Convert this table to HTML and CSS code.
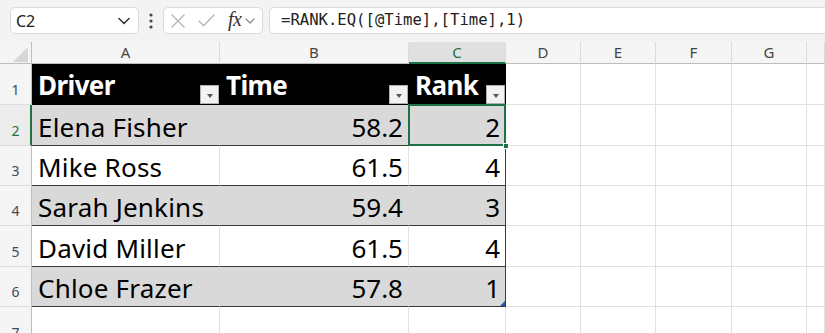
FILE: index.html
```html
<!DOCTYPE html>
<html>
<head>
<meta charset="utf-8">
<link rel="stylesheet" href="styles.css">
</head>
<body>
<div class="app">
  <div class="toolbar">
    <div class="namebox">
      <span class="name">C2</span>
      <svg class="chev" width="12" height="8" viewBox="0 0 12 8"><path d="M1 1.5 L6 6.5 L11 1.5" fill="none" stroke="#333" stroke-width="1.5" stroke-linecap="round" stroke-linejoin="round"/></svg>
    </div>
    <div class="dots">
      <svg width="6" height="16" viewBox="0 0 6 16"><circle cx="3" cy="2" r="1.6" fill="#444"/><circle cx="3" cy="8" r="1.6" fill="#444"/><circle cx="3" cy="14" r="1.6" fill="#444"/></svg>
    </div>
    <div class="fxbox">
      <svg class="ic-x" width="16" height="14" viewBox="0 0 16 14"><path d="M1.5 0.5 L14.5 13.5 M14.5 0.5 L1.5 13.5" stroke="#b3b3b3" stroke-width="1.3" fill="none"/></svg>
      <svg class="ic-ok" width="17" height="13" viewBox="0 0 17 13"><path d="M0.8 6.8 L5.6 11.8 L16.2 0.8" stroke="#b3b3b3" stroke-width="1.3" fill="none"/></svg>
      <span class="fx">fx</span>
      <svg class="chev2" width="10" height="6" viewBox="0 0 10 6"><path d="M1 1 L5 5 L9 1" fill="none" stroke="#8a8a8a" stroke-width="1.2" stroke-linecap="round" stroke-linejoin="round"/></svg>
    </div>
    <div class="formula">=RANK.EQ([@Time],[Time],1)</div>
  </div>

  <div class="grid">
    <!-- column headers -->
    <div class="corner"><svg width="32" height="22" viewBox="0 0 32 22"><polygon points="28,5 28,20 13,20" fill="#d6d6d6"/></svg></div>
    <div class="hdr">A</div>
    <div class="hdr">B</div>
    <div class="hdr sel">C</div>
    <div class="hdr">D</div>
    <div class="hdr">E</div>
    <div class="hdr">F</div>
    <div class="hdr">G</div>
    <div class="hdr"></div>

    <!-- row 1 -->
    <div class="rn">1</div>
    <div class="c th">Driver<span class="flt"><span class="tri"></span></span></div>
    <div class="c th">Time<span class="flt"><span class="tri"></span></span></div>
    <div class="c th last">Rank<span class="flt"><span class="tri"></span></span></div>
    <div class="c"></div><div class="c"></div><div class="c"></div><div class="c"></div><div class="c"></div>

    <!-- row 2 -->
    <div class="rn sel">2</div>
    <div class="c td band">Elena Fisher</div>
    <div class="c td band num">58.2</div>
    <div class="c td band num last active">2<span class="selbox"></span><span class="handle"></span></div>
    <div class="c"></div><div class="c"></div><div class="c"></div><div class="c"></div><div class="c"></div>

    <!-- row 3 -->
    <div class="rn">3</div>
    <div class="c td">Mike Ross</div>
    <div class="c td num">61.5</div>
    <div class="c td num last">4</div>
    <div class="c"></div><div class="c"></div><div class="c"></div><div class="c"></div><div class="c"></div>

    <!-- row 4 -->
    <div class="rn">4</div>
    <div class="c td band">Sarah Jenkins</div>
    <div class="c td band num">59.4</div>
    <div class="c td band num last">3</div>
    <div class="c"></div><div class="c"></div><div class="c"></div><div class="c"></div><div class="c"></div>

    <!-- row 5 -->
    <div class="rn">5</div>
    <div class="c td">David Miller</div>
    <div class="c td num">61.5</div>
    <div class="c td num last">4</div>
    <div class="c"></div><div class="c"></div><div class="c"></div><div class="c"></div><div class="c"></div>

    <!-- row 6 -->
    <div class="rn">6</div>
    <div class="c td band">Chloe Frazer</div>
    <div class="c td band num">57.8</div>
    <div class="c td band num last">1<span class="resize"></span></div>
    <div class="c"></div><div class="c"></div><div class="c"></div><div class="c"></div><div class="c"></div>

    <!-- row 7 -->
    <div class="rn">7</div>
    <div class="c"></div><div class="c"></div><div class="c"></div><div class="c"></div>
    <div class="c"></div><div class="c"></div><div class="c"></div><div class="c"></div>
  </div>
</div>
</body>
</html>
```

FILE: styles.css
```css
* { box-sizing: border-box; }
html, body { margin: 0; padding: 0; }
body {
  width: 825px;
  height: 333px;
  overflow: hidden;
  background: #ffffff;
  font-family: "Noto Sans", "Liberation Sans", sans-serif;
}
.app {
  display: flex;
  flex-direction: column;
  height: 333px;
}

/* ---------- toolbar ---------- */
.toolbar {
  height: 42px;
  flex: none;
  background: #f3f3f3;
  display: flex;
  align-items: flex-start;
  padding: 7px 0 0 10px;
}
.namebox {
  width: 129px;
  height: 27px;
  background: #fff;
  border: 1px solid #dadada;
  border-radius: 5px;
  display: flex;
  align-items: center;
  justify-content: space-between;
  padding: 0 8px 0 5px;
}
.name {
  font-size: 16px;
  color: #222;
  font-family: "Noto Sans", "Liberation Sans", sans-serif;
}
.chev { display: block; }
.dots {
  width: 24px;
  height: 27px;
  display: flex;
  align-items: center;
  justify-content: center;
}
.dots svg { display: block; }
.fxbox {
  width: 100px;
  height: 27px;
  background: #fff;
  border: 1px solid #dadada;
  border-radius: 5px;
  display: flex;
  align-items: center;
  padding-left: 6px;
}
.ic-x { display: block; margin-right: 12px; }
.ic-ok { display: block; margin-right: 13px; }
.fx {
  font-family: "Liberation Serif", "DejaVu Serif", serif;
  font-style: italic;
  font-size: 20px;
  color: #333;
  line-height: 1;
  margin-top: -3px;
  margin-right: 4px;
  letter-spacing: -0.5px;
}
.chev2 { display: block; margin-top: 1px; }
.formula {
  flex: 1;
  height: 27px;
  margin-left: 6px;
  margin-right: -12px;
  background: #fff;
  border: 1px solid #dadada;
  border-radius: 5px;
  font-family: "DejaVu Sans Mono", "Liberation Mono", monospace;
  font-size: 15.6px;
  color: #222;
  line-height: 25px;
  padding-left: 11px;
  white-space: nowrap;
}

/* ---------- grid ---------- */
.grid {
  flex: 1;
  display: grid;
  grid-template-columns: 32px 188px 189px 97px 75px 75px 76px 75px 1fr;
  grid-template-rows: 22px 41px 41px 40px 40px 41px 40px 41px;
  background: #fff;
}
.corner {
  background: #f5f5f5;
  border-right: 1px solid #bdbdbd;
  border-bottom: 1px solid #bdbdbd;
}
.corner svg { display: block; }
.hdr {
  background: #f5f5f5;
  border-right: 1px solid #dcdcdc;
  border-bottom: 1px solid #bdbdbd;
  font-size: 15px;
  color: #444;
  text-align: center;
  line-height: 21px;
}
.hdr.sel {
  background: #e0e0e0;
  color: #1e7145;
  border-bottom: 2px solid #1e7145;
}
.rn {
  background: #f5f5f5;
  border-right: 1px solid #bdbdbd;
  border-bottom: 1px solid #dcdcdc;
  font-size: 14px;
  color: #3f4a5c;
  line-height: 14px;
  display: flex;
  align-items: flex-end;
  justify-content: center;
  padding-bottom: 7px;
}
.rn.sel {
  color: #1e7145;
  background: #ececec;
  border-right: 2px solid #1e7145;
  padding-left: 1px;
}
.c {
  border-right: 1px solid #e1e1e1;
  border-bottom: 1px solid #e1e1e1;
  position: relative;
}
.th, .td {
  display: flex;
  align-items: flex-end;
  font-size: 26px;
  line-height: 26px;
  white-space: nowrap;
  padding: 0 5px 5px 6px;
}
.th {
  background: #000;
  color: #fff;
  font-weight: 700;
  letter-spacing: -0.6px;
  border-right-color: #000;
  border-bottom-color: #000;
  padding-bottom: 6px;
}
.td {
  color: #000;
  letter-spacing: 0.2px;
  border-bottom-color: #3a3a3a;
}
.band {
  background: #d9d9d9;
  border-right-color: #d9d9d9;
}
.num { justify-content: flex-end; letter-spacing: 0; }
.td.last { border-right-color: #3a3a3a; }

/* filter buttons */
.flt {
  position: absolute;
  right: 0;
  bottom: 0;
  width: 19px;
  height: 19px;
  background: #f2f2f2;
  border: 1px solid #b0b0b0;
  display: flex;
  align-items: center;
  justify-content: center;
}
.tri {
  width: 0;
  height: 0;
  border-left: 3.5px solid transparent;
  border-right: 3.5px solid transparent;
  border-top: 4px solid #555;
  margin-top: 2px;
}

/* selection */
.selbox {
  position: absolute;
  left: -1px;
  top: -1px;
  right: -1px;
  bottom: -1px;
  border: 2px solid #1e7145;
  pointer-events: none;
}
.handle {
  position: absolute;
  right: -4px;
  bottom: -4px;
  width: 6px;
  height: 6px;
  background: #1e7145;
  border: 1px solid #fff;
  z-index: 2;
}
.resize {
  position: absolute;
  right: 0;
  bottom: 0;
  width: 0;
  height: 0;
  border-left: 5px solid transparent;
  border-bottom: 5px solid #2f4fb0;
}
```
